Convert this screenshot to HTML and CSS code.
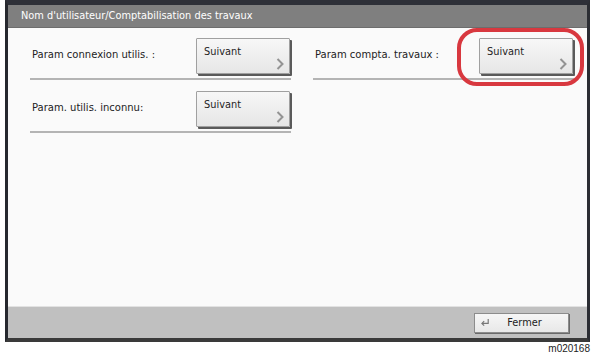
FILE: index.html
```html
<!DOCTYPE html>
<html lang="fr">
  <head>
    <meta charset="UTF-8">
    <title>Nom d'utilisateur/Comptabilisation des travaux</title>
    <link rel="stylesheet" href="styles.css">
  </head>
  <body>
    <div class="panel">
      <!-- Title bar -->
      <div class="title-bar">Nom d'utilisateur/Comptabilisation des travaux</div>
      <!-- Settings -->
      <div class="content">
        <div class="column">
          <div class="row">
            <span class="label">Param connexion utilis. :</span>
            <button class="next-btn">Suivant
              <svg class="chevron" viewBox="0 0 8 12"><path d="M1.5 1 L6.5 6 L1.5 11" /></svg>
            </button>
          </div>
          <div class="row">
            <span class="label">Param. utilis. inconnu:</span>
            <button class="next-btn">Suivant
              <svg class="chevron" viewBox="0 0 8 12"><path d="M1.5 1 L6.5 6 L1.5 11" /></svg>
            </button>
          </div>
        </div>
        <div class="column">
          <div class="row">
            <span class="label">Param compta. travaux :</span>
            <button class="next-btn highlighted">Suivant
              <svg class="chevron" viewBox="0 0 8 12"><path d="M1.5 1 L6.5 6 L1.5 11" /></svg>
            </button>
          </div>
        </div>
      </div>
      <!-- Footer -->
      <div class="footer">
        <button class="close-btn">
          <svg class="return-icon" viewBox="0 0 12 10"><path d="M9 1 V6 H2 M4.5 3.5 L2 6 L4.5 8.5" /></svg>
          <span>Fermer</span>
        </button>
      </div>
    </div>
    <div class="figure-id">m020168</div>
  </body>
</html>
```

FILE: styles.css
```css
/* General */
body {
  margin: 0;
  background: #ffffff;
  font-family: "DejaVu Sans", Tahoma, sans-serif;
}

.panel {
  margin-left: 5px;
  width: 579px;
  height: 333px;
  border-left: 3px solid #26282e;
  border-right: 3px solid #2b2d33;
  border-top: 5px solid #2e3038;
  border-bottom: 4px solid #3a3a3a;
  display: flex;
  flex-direction: column;
  background: #fafafa;
}

/* Title bar */
.title-bar {
  height: 22px;
  line-height: 21px;
  background: #7f7f7f;
  color: #ffffff;
  font-size: 9.8px;
  padding-left: 13px;
  border-bottom: 1px solid #6d6d6d;
}

/* Content */
.content {
  flex: 1;
  display: grid;
  grid-template-columns: 261px 261px;
  gap: 22px;
  padding-left: 22px;
  background: #fafafa;
}

.row {
  display: flex;
  align-items: center;
  justify-content: space-between;
  padding-top: 10px;
  padding-bottom: 4px;
  border-bottom: 2px solid #b4b4b4;
  margin-bottom: 1px;
}

.label {
  padding-left: 2px;
  padding-bottom: 3px;
  font-size: 10px;
  color: #222222;
}

.next-btn {
  position: relative;
  width: 94px;
  height: 36px;
  margin-right: 1px;
  padding: 7px 0 0 7px;
  text-align: left;
  vertical-align: top;
  font-family: inherit;
  font-size: 9.8px;
  color: #1e1e1e;
  background: linear-gradient(#f7f7f7, #e6e6e6);
  border: 1px solid #a0a0a0;
  border-radius: 1px;
  box-shadow: 2px 2px 0 #5a5a5a;
  display: flex;
  align-items: flex-start;
}

.chevron {
  position: absolute;
  right: 5px;
  bottom: 3px;
  width: 8px;
  height: 12px;
  fill: none;
  stroke: #939393;
  stroke-width: 2;
}

/* Red highlight ring */
.highlighted::after {
  content: "";
  position: absolute;
  left: -23px;
  right: -12px;
  top: -11px;
  bottom: -13px;
  border: 4px solid #d8383f;
  border-radius: 20px;
}

/* Footer */
.footer {
  height: 31px;
  background: #c0c0c0;
  border-top: 1px solid #e2e2e2;
  display: flex;
  justify-content: flex-end;
  align-items: center;
  padding-right: 18px;
}

.close-btn {
  width: 95px;
  height: 20px;
  padding: 0 0 0 5px;
  display: flex;
  align-items: center;
  font-family: inherit;
  font-size: 9.8px;
  color: #222222;
  background: linear-gradient(#f6f6f6, #e8e8e8);
  border: 1px solid #8c8c8c;
  box-shadow: 1px 1px 0 #6a6a6a;
}

.close-btn span {
  flex: 1;
  text-align: center;
  padding-right: 10px;
}

.return-icon {
  width: 11px;
  height: 9px;
  fill: none;
  stroke: #777777;
  stroke-width: 1.3;
}

.figure-id {
  width: 590px;
  text-align: right;
  font-size: 10px;
  color: #222222;
  font-family: "Liberation Sans", Arial, sans-serif;
  margin-top: 1px;
}
```
